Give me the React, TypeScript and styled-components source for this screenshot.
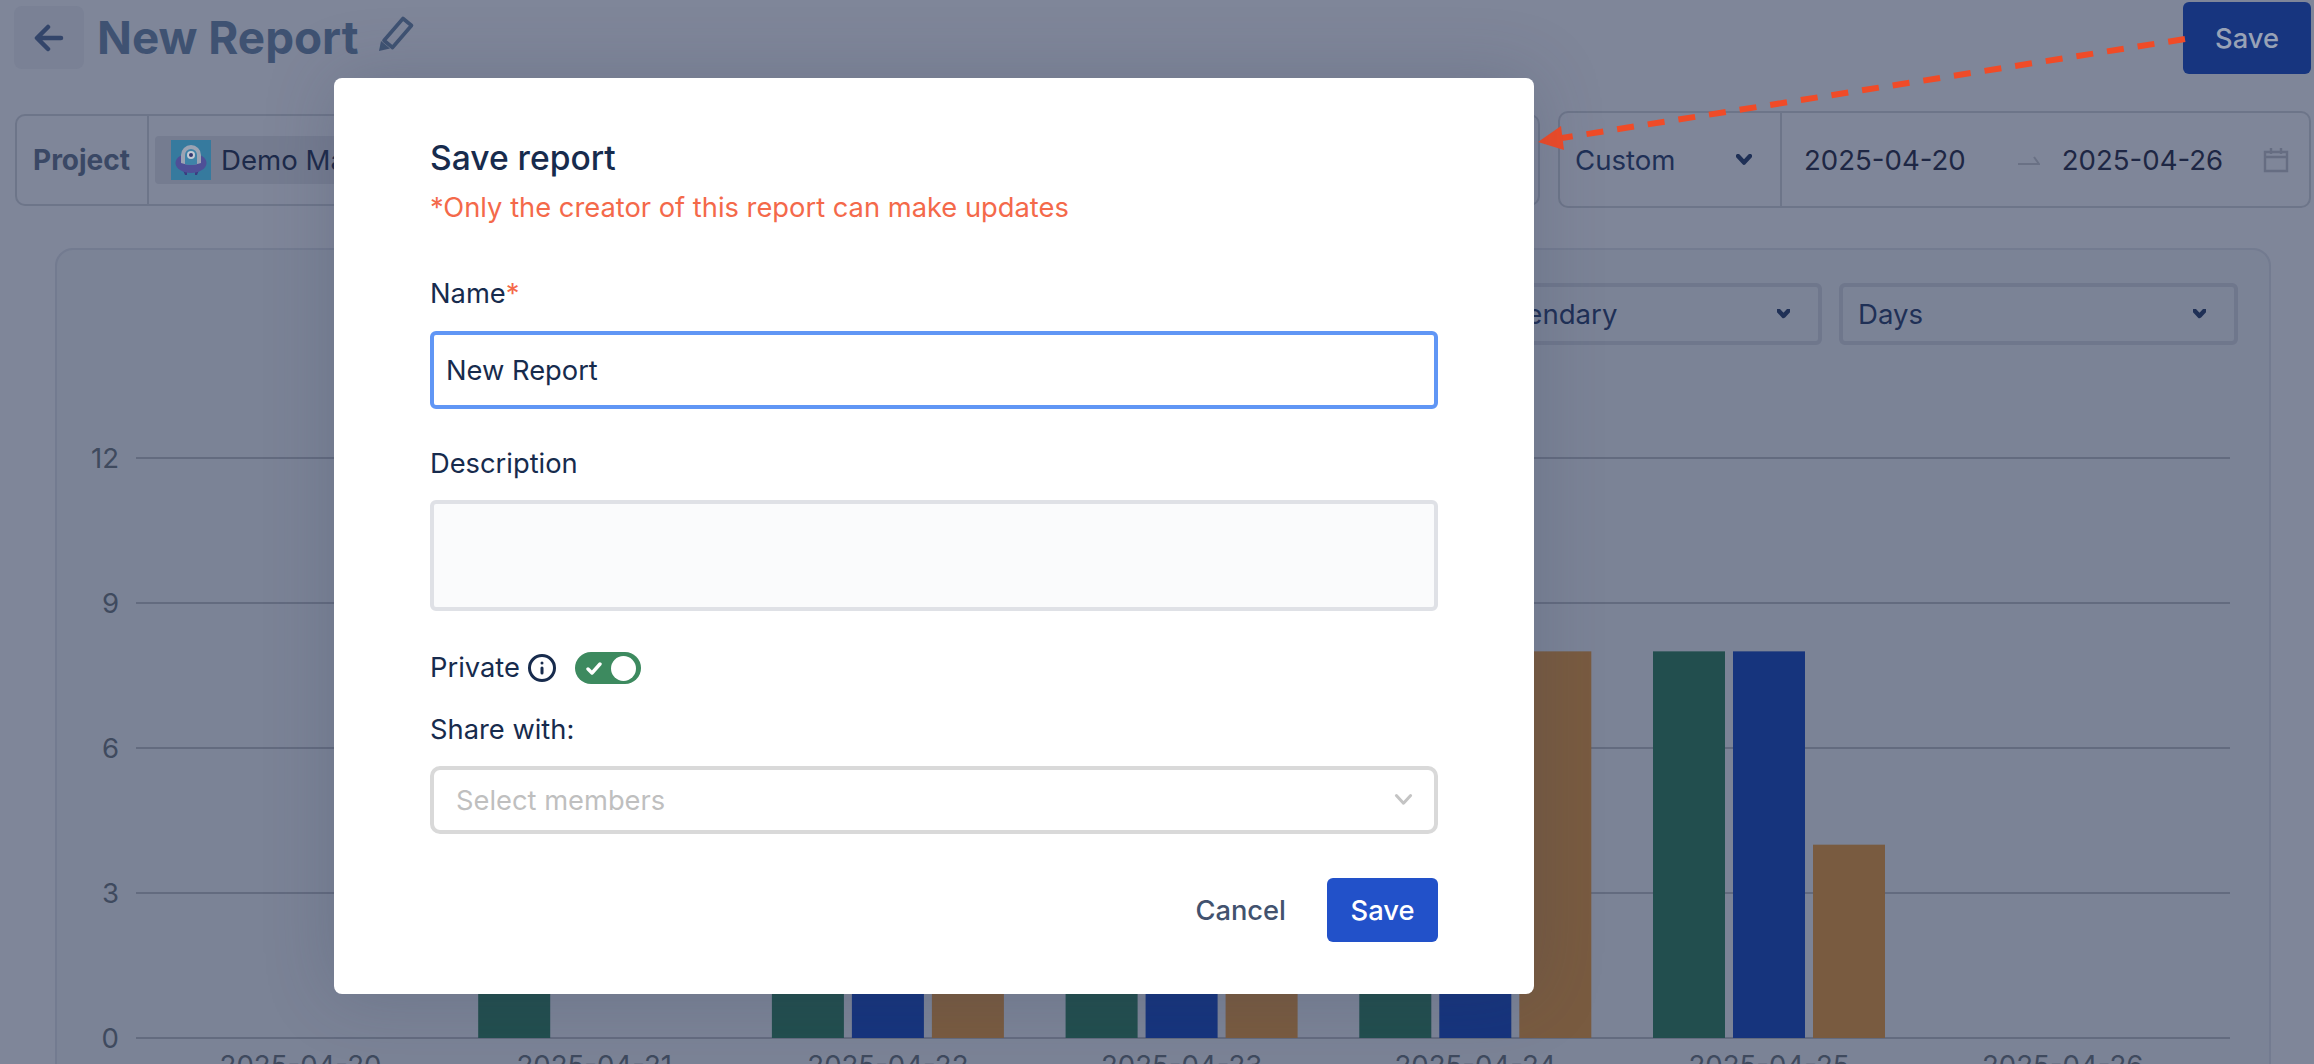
import React from "react";
import styled, { createGlobalStyle } from "styled-components";
import { Info } from "lucide-react";

const GlobalStyle = createGlobalStyle`
  html, body {
    margin: 0;
    padding: 0;
    background: #7f8699;
  }

  * {
    box-sizing: border-box;
  }
`;

const Page = styled.div`
  position: relative;
  width: 2314px;
  height: 1064px;
  overflow: hidden;
  background: #7f8699;
  color: #1d2a4a;
  font-family: Inter, "Liberation Sans", sans-serif;
  font-size: 27.6px;
`;

const Header = styled.header`
  display: flex;
  align-items: flex-start;
  height: 74px;
  padding: 2px 3px 0 14px;
`;

const BackButton = styled.button`
  display: flex;
  align-items: center;
  justify-content: center;
  width: 70px;
  height: 63px;
  margin: 4px 13px 0 0;
  padding: 0;
  border: none;
  border-radius: 8px;
  background: #7a8195;
`;

const PageTitle = styled.h1`
  margin: 0 20px 0 0;
  font-size: 45.8px;
  line-height: 72px;
  font-weight: 700;
  color: #3f5272;
`;

const PencilButton = styled.span`
  display: flex;
  margin: 13px auto 0 0;
`;

const TopSave = styled.button`
  width: 128px;
  height: 72px;
  border: none;
  border-radius: 6px;
  background: #17357f;
  color: #98a2b6;
  font: 500 27.3px Inter, sans-serif;
`;

const FilterRow = styled.div`
  display: flex;
  align-items: center;
  gap: 18px;
  height: 97px;
  margin-top: 37px;
  padding: 0 3px 0 15px;
`;

const FilterGroup = styled.div<{ $width: number; $height: number }>`
  display: flex;
  align-items: stretch;
  width: ${(p) => p.$width}px;
  height: ${(p) => p.$height}px;
  border: 2px solid #6d7589;
  border-radius: 10px;
`;

const FilterCell = styled.div<{ $width?: number }>`
  display: flex;
  align-items: center;
  width: ${(p) => (p.$width ? `${p.$width}px` : "auto")};
  flex: ${(p) => (p.$width ? "none" : 1)};
  padding: 0 18px;
  border-right: 2px solid #6d7589;
  white-space: nowrap;

  &:last-child {
    border-right: none;
  }
`;

const ProjectCell = styled(FilterCell)`
  padding: 0 0 0 16px;
`;

const ProjectLabel = styled.span`
  font-size: 28px;
  font-weight: 700;
  color: #3a4865;
`;

const ProjectChip = styled.div`
  display: flex;
  align-items: center;
  gap: 10px;
  height: 48px;
  margin-left: -12px;
  padding: 0 16px;
  border-radius: 4px;
  background: #757c90;
  color: #1d2a4a;
`;

const CustomCell = styled(FilterCell)`
  justify-content: space-between;
  padding: 0 28px 0 15px;
  color: #1f3056;
`;

const DateCell = styled(FilterCell)`
  padding: 0 22px;
  color: #1e2744;
`;

const DateArrow = styled.svg`
  flex: none;
  margin: 0 22px 0 52px;
`;

const CalendarIcon = styled.svg`
  flex: none;
  margin-left: 40px;
`;

const ChartPanel = styled.section`
  height: 900px;
  margin: 40px 43px 0 55px;
  padding: 33px 31px 0 0;
  border: 2px solid #737b90;
  border-radius: 18px;
  background: #7b8396;
`;

const PanelTools = styled.div`
  display: flex;
  justify-content: flex-end;
  gap: 17px;
`;

const ToolSelect = styled.div<{ $width: number }>`
  display: flex;
  align-items: center;
  justify-content: space-between;
  width: ${(p) => p.$width}px;
  height: 62px;
  padding: 0 28px 0 15px;
  border: 4px solid #6f778c;
  border-radius: 6px;
  color: #1f3056;
`;

const ChartSvg = styled.svg`
  display: block;
  margin-top: 55px;
  font-family: Inter, "Liberation Sans", sans-serif;
  font-size: 27.6px;
`;

const ArrowOverlay = styled.svg`
  position: absolute;
  inset: 0;
  pointer-events: none;
`;

const Modal = styled.div`
  position: absolute;
  top: 78px;
  left: 334px;
  width: 1200px;
  height: 916px;
  padding: 60px 96px 0 96px;
  border-radius: 8px;
  background: #ffffff;
  box-shadow: 0 0 70px rgba(50, 60, 90, 0.22);
  color: #172b4d;
  font-size: 27.3px;
`;

const ModalTitle = styled.h2`
  margin: 0;
  font-size: 33.6px;
  line-height: 40px;
  font-weight: 500;
`;

const Notice = styled.p`
  margin: 12px 0 0;
  line-height: 36px;
  color: #f4694a;
`;

const FieldLabel = styled.label<{ $top: number }>`
  display: block;
  margin-top: ${(p) => p.$top}px;
  line-height: 36px;
`;

const Required = styled.span`
  color: #f4694a;
`;

const NameInput = styled.input`
  display: block;
  width: 100%;
  height: 78px;
  margin-top: 19px;
  padding: 0 12px;
  border: 4px solid #6096f5;
  border-radius: 6px;
  outline: none;
  background: #ffffff;
  color: #172b4d;
  font: 400 27.3px Inter, sans-serif;
`;

const DescriptionBox = styled.textarea`
  display: block;
  width: 100%;
  height: 111px;
  margin-top: 18px;
  border: 4px solid #dfe1e6;
  border-radius: 6px;
  outline: none;
  resize: none;
  background: #fafbfc;
`;

const PrivateRow = styled.div`
  display: flex;
  align-items: center;
  height: 36px;
  margin-top: 39px;
  line-height: 36px;
`;

const InfoIcon = styled(Info)`
  margin: 0 18px 0 7px;
`;

const Toggle = styled.span`
  display: flex;
  align-items: center;
  justify-content: space-between;
  width: 66px;
  height: 32px;
  padding: 0 5px 0 11px;
  border-radius: 16px;
  background: #3d8a5f;
`;

const ToggleKnob = styled.span`
  width: 25px;
  height: 25px;
  border-radius: 50%;
  background: #ffffff;
`;

const MemberSelect = styled.div`
  display: flex;
  align-items: center;
  justify-content: space-between;
  height: 68px;
  margin-top: 18px;
  padding: 0 21px 0 22px;
  border: 4px solid #d9d9d9;
  border-radius: 10px;
  color: #bfbfbf;
`;

const ModalActions = styled.div`
  display: flex;
  align-items: center;
  justify-content: flex-end;
  gap: 41px;
  margin-top: 44px;
`;

const CancelButton = styled.button`
  padding: 0;
  border: none;
  background: none;
  color: #42526e;
  font: 500 27.3px Inter, sans-serif;
`;

const SaveButton = styled.button`
  width: 111px;
  height: 64px;
  border: none;
  border-radius: 6px;
  background: #2251c9;
  color: #ffffff;
  font: 500 27.3px Inter, sans-serif;
`;

const Chevron = ({ width = 16, stroke = 4.4, color = "#1f3056" }) => (
  <svg width={width} height={width * 0.7} viewBox="0 0 16 11" fill="none">
    <path
      d="M2 2l6 6.5L14 2"
      stroke={color}
      strokeWidth={(stroke * 16) / width}
      strokeLinecap="round"
      strokeLinejoin="round"
    />
  </svg>
);

const RobotAvatar = () => (
  <svg width="40" height="40" viewBox="0 0 40 40">
    <rect width="40" height="40" fill="#367a9e" />
    <path d="M12 30h4v5h-2zM24 30h4l-2 5h-2z" fill="#3b3c80" />
    <ellipse cx="20" cy="23" rx="15.5" ry="10" fill="#4e4f97" />
    <path d="M10 23V15a10 10 0 0 1 20 0v8a14 5 0 0 1-20 0z" fill="#9ba3b3" />
    <path d="M14 24v-9a6 6 0 0 1 12 0v9a8 3 0 0 1-12 0z" fill="#3f83a8" />
    <circle cx="20" cy="15" r="4" fill="#c5cad4" />
    <circle cx="20" cy="15" r="2" fill="#34386f" />
  </svg>
);

const days = ["2025-04-20", "2025-04-21", "2025-04-22", "2025-04-23", "2025-04-24", "2025-04-25", "2025-04-26"];
const series = [
  { color: "#224e4e", values: [0, 8, 8, 8, 8, 8, 0] },
  { color: "#16347d", values: [0, 0, 8, 8, 8, 8, 0] },
  { color: "#795b40", values: [0, 0, 8, 8, 8, 4, 0] },
];
const BASE_Y = 1038;
const UNIT = 48.33;

const Chart = () => (
  <ChartSvg width="2213" height="680" viewBox="57 400 2213 680">
    {[0, 3, 6, 9, 12].map((tick) => {
      const y = BASE_Y - tick * UNIT;
      return (
        <g key={tick}>
          <line x1="136" x2="2230" y1={y} y2={y} stroke="#636b7f" strokeWidth="2" />
          <text x="119" y={y + 10} textAnchor="end" fill="#3f4a5e">
            {tick}
          </text>
        </g>
      );
    })}
    {days.map((day, i) => {
      const center = 300.5 + i * 293.7;
      return (
        <g key={day}>
          {series.map((s, j) =>
            s.values[i] > 0 ? (
              <rect
                key={s.color}
                x={center - 116 + j * 80}
                y={BASE_Y - s.values[i] * UNIT}
                width="72"
                height={s.values[i] * UNIT}
                fill={s.color}
              />
            ) : null
          )}
          <text x={center} y={BASE_Y + 37} textAnchor="middle" fill="#3f4a5e">
            {day}
          </text>
        </g>
      );
    })}
  </ChartSvg>
);

const App = () => {
  return (
    <Page>
      <GlobalStyle />
      <Header>
        <BackButton>
          <svg width="30" height="30" viewBox="0 0 30 30" fill="none">
            <path
              d="M27 15H4M14 4L3 15l11 11"
              stroke="#33456a"
              strokeWidth="4.5"
              strokeLinecap="round"
              strokeLinejoin="round"
            />
          </svg>
        </BackButton>
        <PageTitle>New Report</PageTitle>
        <PencilButton>
          <svg width="40" height="40" viewBox="0 0 40 40" fill="none">
            <path
              d="M25 3.5l8.5 7-19 22-8.5-7z"
              stroke="#3f5272"
              strokeWidth="3.6"
              strokeLinejoin="round"
            />
            <path d="M1 36l2-10 9 7.5z" fill="#3f5272" />
          </svg>
        </PencilButton>
        <TopSave>Save</TopSave>
      </Header>

      <FilterRow>
        <FilterGroup $width={1525} $height={92}>
          <ProjectCell $width={132}>
            <ProjectLabel>Project</ProjectLabel>
          </ProjectCell>
          <FilterCell>
            <ProjectChip>
              <RobotAvatar />
              Demo Marketing
            </ProjectChip>
          </FilterCell>
        </FilterGroup>
        <FilterGroup $width={753} $height={97}>
          <CustomCell $width={222}>
            Custom
            <Chevron />
          </CustomCell>
          <DateCell>
            2025-04-20
            <DateArrow width="22" height="12" viewBox="0 0 22 12" fill="none">
              <path d="M0 10h21L16 3" stroke="#6a7185" strokeWidth="2" />
            </DateArrow>
            2025-04-26
            <CalendarIcon width="26" height="26" viewBox="0 0 26 26" fill="none">
              <path
                d="M2 5h22v19H2zM2 10h22M8 1v6M18 1v6"
                stroke="#666d82"
                strokeWidth="2.4"
              />
            </CalendarIcon>
          </DateCell>
        </FilterGroup>
      </FilterRow>

      <ChartPanel>
        <PanelTools>
          <ToolSelect $width={357}>
            Calendary
            <Chevron width={13} />
          </ToolSelect>
          <ToolSelect $width={399}>
            Days
            <Chevron width={13} />
          </ToolSelect>
        </PanelTools>
        <Chart />
      </ChartPanel>

      <ArrowOverlay width="2314" height="1064" viewBox="0 0 2314 1064" fill="none">
        <line
          x1="2185"
          y1="39"
          x2="1562"
          y2="138"
          stroke="#f04b27"
          strokeWidth="6"
          strokeDasharray="17 14"
        />
        <path d="M1538 142l23-16 3 24z" fill="#f04b27" />
      </ArrowOverlay>

      <Modal>
        <ModalTitle>Save report</ModalTitle>
        <Notice>*Only the creator of this report can make updates</Notice>

        <FieldLabel $top={50}>
          Name<Required>*</Required>
        </FieldLabel>
        <NameInput value="New Report" readOnly />

        <FieldLabel $top={37}>Description</FieldLabel>
        <DescriptionBox readOnly />

        <PrivateRow>
          Private
          <InfoIcon size={30} strokeWidth={2.4} color="#172b4d" />
          <Toggle>
            <svg width="16" height="13" viewBox="0 0 16 13" fill="none">
              <path
                d="M2 7l4 4 8-9"
                stroke="#ffffff"
                strokeWidth="3.4"
                strokeLinecap="round"
                strokeLinejoin="round"
              />
            </svg>
            <ToggleKnob />
          </Toggle>
        </PrivateRow>

        <FieldLabel $top={26}>Share with:</FieldLabel>
        <MemberSelect>
          Select members
          <Chevron width={19} stroke={3} color="#c4c4c4" />
        </MemberSelect>

        <ModalActions>
          <CancelButton>Cancel</CancelButton>
          <SaveButton>Save</SaveButton>
        </ModalActions>
      </Modal>
    </Page>
  );
};

export default App;
